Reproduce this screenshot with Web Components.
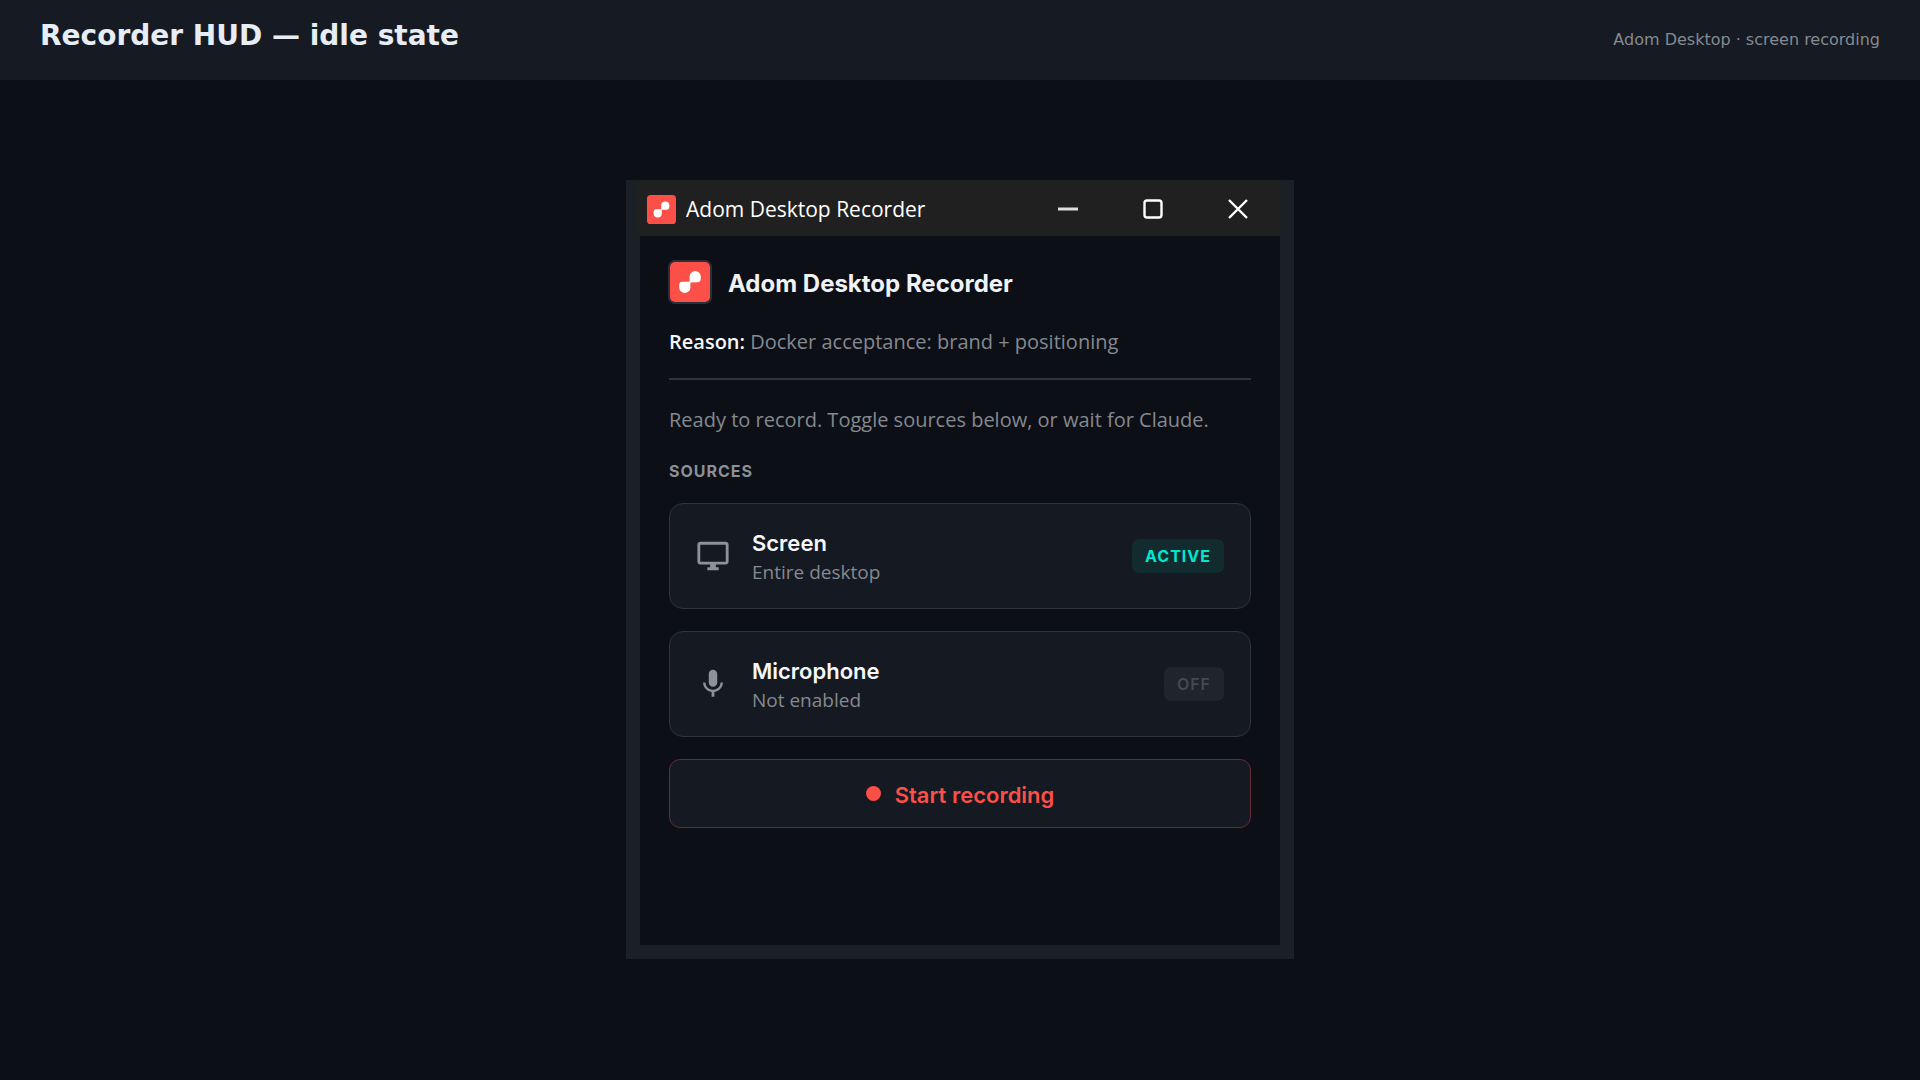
<!DOCTYPE html>
<html lang="en">
<head>
<meta charset="utf-8">
<title>Recorder HUD — idle state</title>
<style>
html, body { height: 100%; margin: 0; }
body { background: #0c0f16; }
</style>
</head>
<body>
<hud-page>
  <page-header slot="header">
    Recorder HUD — idle state
    <span slot="note">Adom Desktop · screen recording</span>
  </page-header>
  <recorder-window label="Adom Desktop Recorder">
    <recorder-intro heading="Adom Desktop Recorder">
      <span slot="reason">Docker acceptance: brand + positioning</span>
      <span slot="status">Ready to record. Toggle sources below, or wait for Claude.</span>
    </recorder-intro>
    <source-list label="Sources">
      <source-card state="active" icon="screen">Screen<span slot="detail">Entire desktop</span></source-card>
      <source-card state="off" icon="mic">Microphone<span slot="detail">Not enabled</span></source-card>
    </source-list>
    <record-button>Start recording</record-button>
  </recorder-window>
</hud-page>

<script>
const define = (name, render, css) => customElements.define(name, class extends HTMLElement {
  connectedCallback() {
    if (this.shadowRoot) return;
    this.attachShadow({ mode: 'open' }).innerHTML =
      `<style>*{box-sizing:border-box;margin:0}${css}</style>${render(this)}`;
  }
});

define('hud-page', () => `<slot name="header"></slot><main><slot></slot></main>`, `
  :host { display: flex; flex-direction: column; min-height: 100%; color: #e6edf3;
    font-family: "Open Sans", "Segoe UI", sans-serif; font-size: 20px;
    --display: Inter, "Liberation Sans", sans-serif; --muted: #858990; --red: #fc4f48; --card: #151921; }
  main { flex: 1; display: flex; justify-content: center; align-items: flex-start; padding: 100px 24px; }
`);

define('page-header', () => `<header><h1><slot></slot></h1><p><slot name="note"></slot></p></header>`, `
  :host { display: block; font-family: "DejaVu Sans", sans-serif; }
  header { display: flex; justify-content: space-between; align-items: baseline; min-height: 80px;
    padding: 20px 40px; background: #161a22; }
  h1 { font-size: 28px; line-height: 32px; font-weight: 700; color: #e6edf5; }
  p { font-size: 16px; line-height: 20px; color: #848a93; }
`);

define('brand-logo', () => `
  <svg viewBox="0 0 40 40" aria-hidden="true">
    <rect width="40" height="40" rx="5" fill="#fc4f48"/>
    <path fill="#fff" d="M19.6 20.4V14.6A5.6 5.6 0 0 1 30.8 14.6V16.8Q30.8 20.2 27.6 20.2ZM20.4 19.6V25.4A5.6 5.6 0 0 1 9.2 25.4V23.2Q9.2 19.8 12.4 19.8Z"/>
  </svg>`, `
  :host { display: block; flex: none; width: var(--logo, 40px); height: var(--logo, 40px); }
  svg { display: block; width: 100%; height: 100%; }
`);

define('recorder-window', el => `
  <section aria-label="${el.getAttribute('label')}">
    <div class="bar">
      <brand-logo></brand-logo>
      <span class="title">${el.getAttribute('label')}</span>
      <button aria-label="Minimize"><svg viewBox="0 0 20 20"><path d="M0 10H20" stroke-width="3" stroke="#ddd"/></svg></button>
      <button aria-label="Maximize"><svg viewBox="0 0 20 20"><rect x="1.5" y="1.5" width="17" height="17" rx="2.5" stroke-width="2.4"/></svg></button>
      <button aria-label="Close"><svg viewBox="0 0 20 20"><path d="M1 1L19 19M19 1L1 19" stroke-width="2.4"/></svg></button>
    </div>
    <div class="body"><slot></slot></div>
  </section>`, `
  :host { display: block; width: 100%; max-width: 668px; }
  section { background: #1a2026; padding: 0 14px 14px; }
  .bar { display: flex; align-items: center; height: 56px; margin-left: -2px; padding: 2px 0 0 9px; background: #202020; --logo: 29px; }
  .title { flex: 1; padding-left: 10px; font-size: 21px; line-height: 28px; color: #fff; }
  button { display: grid; place-items: center; width: 85px; height: 54px; padding: 0; border: 0; background: none; }
  svg { width: 20px; height: 20px; fill: none; stroke: #fff; }
  .body { display: flex; flex-direction: column; gap: 27px; min-height: 709px; padding: 26px 29px; background: #0c0f16; }
`);

define('recorder-intro', el => `
  <div class="brand"><brand-logo></brand-logo><h2>${el.getAttribute('heading')}</h2></div>
  <p class="reason"><strong>Reason:</strong> <slot name="reason"></slot></p>
  <hr>
  <p><slot name="status"></slot></p>`, `
  :host { display: flex; flex-direction: column; color: var(--muted); }
  .brand { display: flex; align-items: center; gap: 18px; padding-left: 1px; }
  brand-logo { border-radius: 5px; box-shadow: 0 0 0 2px #2b3038; }
  h2 { padding-top: 3px; font: 700 24px/32px var(--display); color: #f0f2f5; }
  p { line-height: 28px; }
  .reason { padding: 26px 0 22px; }
  strong { font-weight: 600; color: #f5f7fa; }
  hr { height: 2px; border: 0; margin-bottom: 26px; background: #30343b; }
`);

define('source-list', el => `<h3>${el.getAttribute('label')}</h3><slot></slot>`, `
  :host { display: flex; flex-direction: column; gap: 22px; margin-bottom: -5px; }
  h3 { font: 700 16px/20px var(--display); letter-spacing: 1px; text-transform: uppercase; color: #8b8f97; }
`);

const icons = {
  screen: `<path d="M21 2H3c-1.1 0-2 .9-2 2v12c0 1.1.9 2 2 2h7v2H8v2h8v-2h-2v-2h7c1.1 0 2-.9 2-2V4c0-1.1-.9-2-2-2zm0 14H3V4h18v12z"/>`,
  mic: `<path d="M12 14c1.66 0 3-1.34 3-3V5c0-1.66-1.34-3-3-3S9 3.34 9 5v6c0 1.66 1.34 3 3 3zm5.3-3c0 3-2.54 5.1-5.3 5.1S6.7 14 6.7 11H5c0 3.41 2.72 6.23 6 6.72V21h2v-3.28c3.28-.48 6-3.3 6-6.72h-1.7z"/>`
};

define('source-card', el => {
  const state = el.getAttribute('state');
  return `<button aria-pressed="${state === 'active'}">
    <svg viewBox="0 0 24 24" aria-hidden="true">${icons[el.getAttribute('icon')]}</svg>
    <span class="text"><span class="name"><slot></slot></span><span class="detail"><slot name="detail"></slot></span></span>
    <span class="pill">${state}</span>
  </button>`;
}, `
  :host { display: block; }
  button { display: flex; align-items: center; gap: 22px; width: 100%; height: 106px; padding: 0 26px;
    text-align: left; font: inherit; background: var(--card); border: 1px solid #2f333a; border-radius: 14px; }
  svg { width: 34px; height: 34px; fill: #8b929b; }
  .text { flex: 1; display: flex; flex-direction: column; padding-top: 4px; color: var(--muted); }
  .name { font: 600 22px/28px var(--display); color: #f5f7fa; }
  .detail { font-size: 19px; line-height: 30px; }
  .pill { padding: 0 13px; border-radius: 7px; font: 600 16px/34px var(--display); letter-spacing: 1px; text-transform: uppercase;
    background: #20242c; color: #454a52; }
  :host([state="active"]) .pill { background: #122b2f; color: #00e6d2; font-weight: 700; }
`);

define('record-button', () => `<button><i></i><span><slot></slot></span></button>`, `
  :host { display: block; }
  button { display: flex; align-items: center; justify-content: center; gap: 14px; width: 100%; height: 69px;
    font: 600 22px/28px var(--display); color: var(--red); background: var(--card); border: 1px solid #642e33; border-radius: 11px; }
  i { width: 15px; height: 15px; border-radius: 50%; background: currentColor; }
  span { padding-top: 3px; }
`);
</script>
</body>
</html>
